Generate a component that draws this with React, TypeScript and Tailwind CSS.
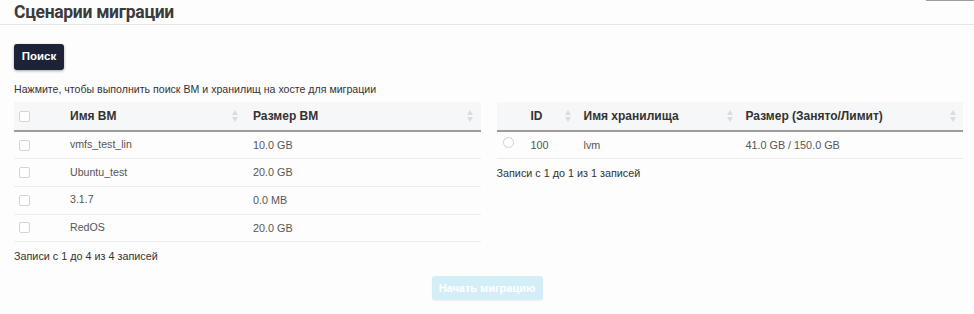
import React from "react";

const SortIcon = () => (
  <svg width="6" height="12" viewBox="0 0 6 12" className="shrink-0">
    <path d="M3 0 L6 5 L0 5 Z" fill="#dcdcdc" />
    <path d="M3 12 L6 7 L0 7 Z" fill="#dcdcdc" />
  </svg>
);

const Checkbox = () => (
  <span className="inline-block w-[11px] h-[11px] border border-[#d4d4d4] rounded-[2px] bg-white" />
);

const Radio = () => (
  <span className="inline-block w-[11px] h-[11px] border border-[#cfcfcf] rounded-full bg-white" />
);

const vms = [
  { name: "vmfs_test_lin", size: "10.0 GB" },
  { name: "Ubuntu_test", size: "20.0 GB" },
  { name: "3.1.7", size: "0.0 MB" },
  { name: "RedOS", size: "20.0 GB" },
];

export default function App() {
  return (
    <div
      className="relative w-[974px] h-[314px] bg-[#fdfdfd] text-[#333] overflow-hidden"
      style={{ fontFamily: '"Liberation Sans", Arial, sans-serif' }}
    >
      <div className="absolute right-0 top-0 w-[48px] h-px bg-[#9a9ea3]" />
      <div className="h-[25px] border-b border-[#e6e6e6] pl-[14px] flex items-end">
        <h1
          className="text-[17.5px] tracking-[-0.3px] leading-[22px] font-bold text-[#3b3b3b] pb-[1px] font-[Roboto,'Liberation_Sans',sans-serif]"
        >
          Сценарии миграции
        </h1>
      </div>
      <div className="pl-[14px] pr-[11px]">
        <button className="mt-[19px] h-[26px] w-[50px] rounded-[3px] bg-[#1d2236] text-white text-[11.5px] font-bold shadow-[0_1px_3px_rgba(0,0,0,0.35)]">
          Поиск
        </button>
        <p className="mt-[12px] text-[10.6px] leading-[14px] text-[#333]">
          Нажмите, чтобы выполнить поиск ВМ и хранилищ на хосте для миграции
        </p>
        <div className="mt-[6px] grid grid-cols-2 gap-[16px]">
          <div>
            <table className="w-full table-fixed border-collapse">
              <colgroup>
                <col className="w-[46px]" />
                <col className="w-[183px]" />
                <col />
              </colgroup>
              <thead>
                <tr className="bg-[#f6f7f9] border-b-2 border-[#9c9c9c]">
                  <th className="h-[29px] p-0 pl-[5px] text-left align-middle">
                    <span className="flex items-center"><Checkbox /></span>
                  </th>
                  <th className="h-[29px] p-0 pl-[10px] pr-[5px] text-left text-[12px] font-bold text-[#333]">
                    <div className="flex items-center justify-between">
                      <span>Имя ВМ</span>
                      <SortIcon />
                    </div>
                  </th>
                  <th className="h-[29px] p-0 pl-[10px] pr-[8px] text-left text-[12px] font-bold text-[#333]">
                    <div className="flex items-center justify-between">
                      <span>Размер ВМ</span>
                      <SortIcon />
                    </div>
                  </th>
                </tr>
              </thead>
              <tbody>
                {vms.map((v) => (
                  <tr key={v.name} className="border-b border-[#ececec]">
                    <td className="h-[27.7px] p-0 pl-[5px] align-middle">
                      <span className="flex items-center"><Checkbox /></span>
                    </td>
                    <td className="h-[27.7px] p-0 pl-[10px] text-[10.6px] text-[#555]">{v.name}</td>
                    <td className="h-[27.7px] p-0 pl-[10px] text-[10.8px] text-[#555]">{v.size}</td>
                  </tr>
                ))}
              </tbody>
            </table>
            <p className="mt-[7px] text-[10.8px] leading-[14px] text-[#333]">Записи с 1 до 4 из 4 записей</p>
          </div>
          <div>
            <table className="w-full table-fixed border-collapse">
              <colgroup>
                <col className="w-[24px]" />
                <col className="w-[53px]" />
                <col className="w-[162px]" />
                <col />
              </colgroup>
              <thead>
                <tr className="bg-[#f6f7f9] border-b-2 border-[#9c9c9c]">
                  <th className="h-[29px] p-0" />
                  <th className="h-[29px] p-0 pl-[10px] pr-[3px] text-left text-[12px] font-bold text-[#333]">
                    <div className="flex items-center justify-between">
                      <span>ID</span>
                      <SortIcon />
                    </div>
                  </th>
                  <th className="h-[29px] p-0 pl-[10px] pr-[3px] text-left text-[12px] font-bold text-[#333]">
                    <div className="flex items-center justify-between">
                      <span>Имя хранилища</span>
                      <SortIcon />
                    </div>
                  </th>
                  <th className="h-[29px] p-0 pl-[10px] pr-[7px] text-left text-[12px] font-bold text-[#333]">
                    <div className="flex items-center justify-between">
                      <span>Размер (Занято/Лимит)</span>
                      <SortIcon />
                    </div>
                  </th>
                </tr>
              </thead>
              <tbody>
                <tr className="border-b border-[#ececec]">
                  <td className="h-[27.7px] p-0 pl-[6px] align-middle">
                    <span className="flex items-center -mt-[5px]"><Radio /></span>
                  </td>
                  <td className="h-[27.7px] p-0 pl-[10px] text-[10.8px] text-[#555]">100</td>
                  <td className="h-[27.7px] p-0 pl-[10px] text-[10.8px] text-[#555]">lvm</td>
                  <td className="h-[27.7px] p-0 pl-[10px] text-[10.8px] text-[#555]">41.0 GB / 150.0 GB</td>
                </tr>
              </tbody>
            </table>
            <p className="mt-[7px] text-[10.8px] leading-[14px] text-[#333]">Записи с 1 до 1 из 1 записей</p>
          </div>
        </div>
      </div>
      <div className="absolute left-0 right-0 top-[276px] flex justify-center">
        <button className="h-[24px] w-[111px] rounded-[3px] bg-[#d4eef7] text-white text-[11px] font-bold shadow-[0_1px_2px_rgba(0,0,0,0.06)]">
          Начать миграцию
        </button>
      </div>
    </div>
  );
}
